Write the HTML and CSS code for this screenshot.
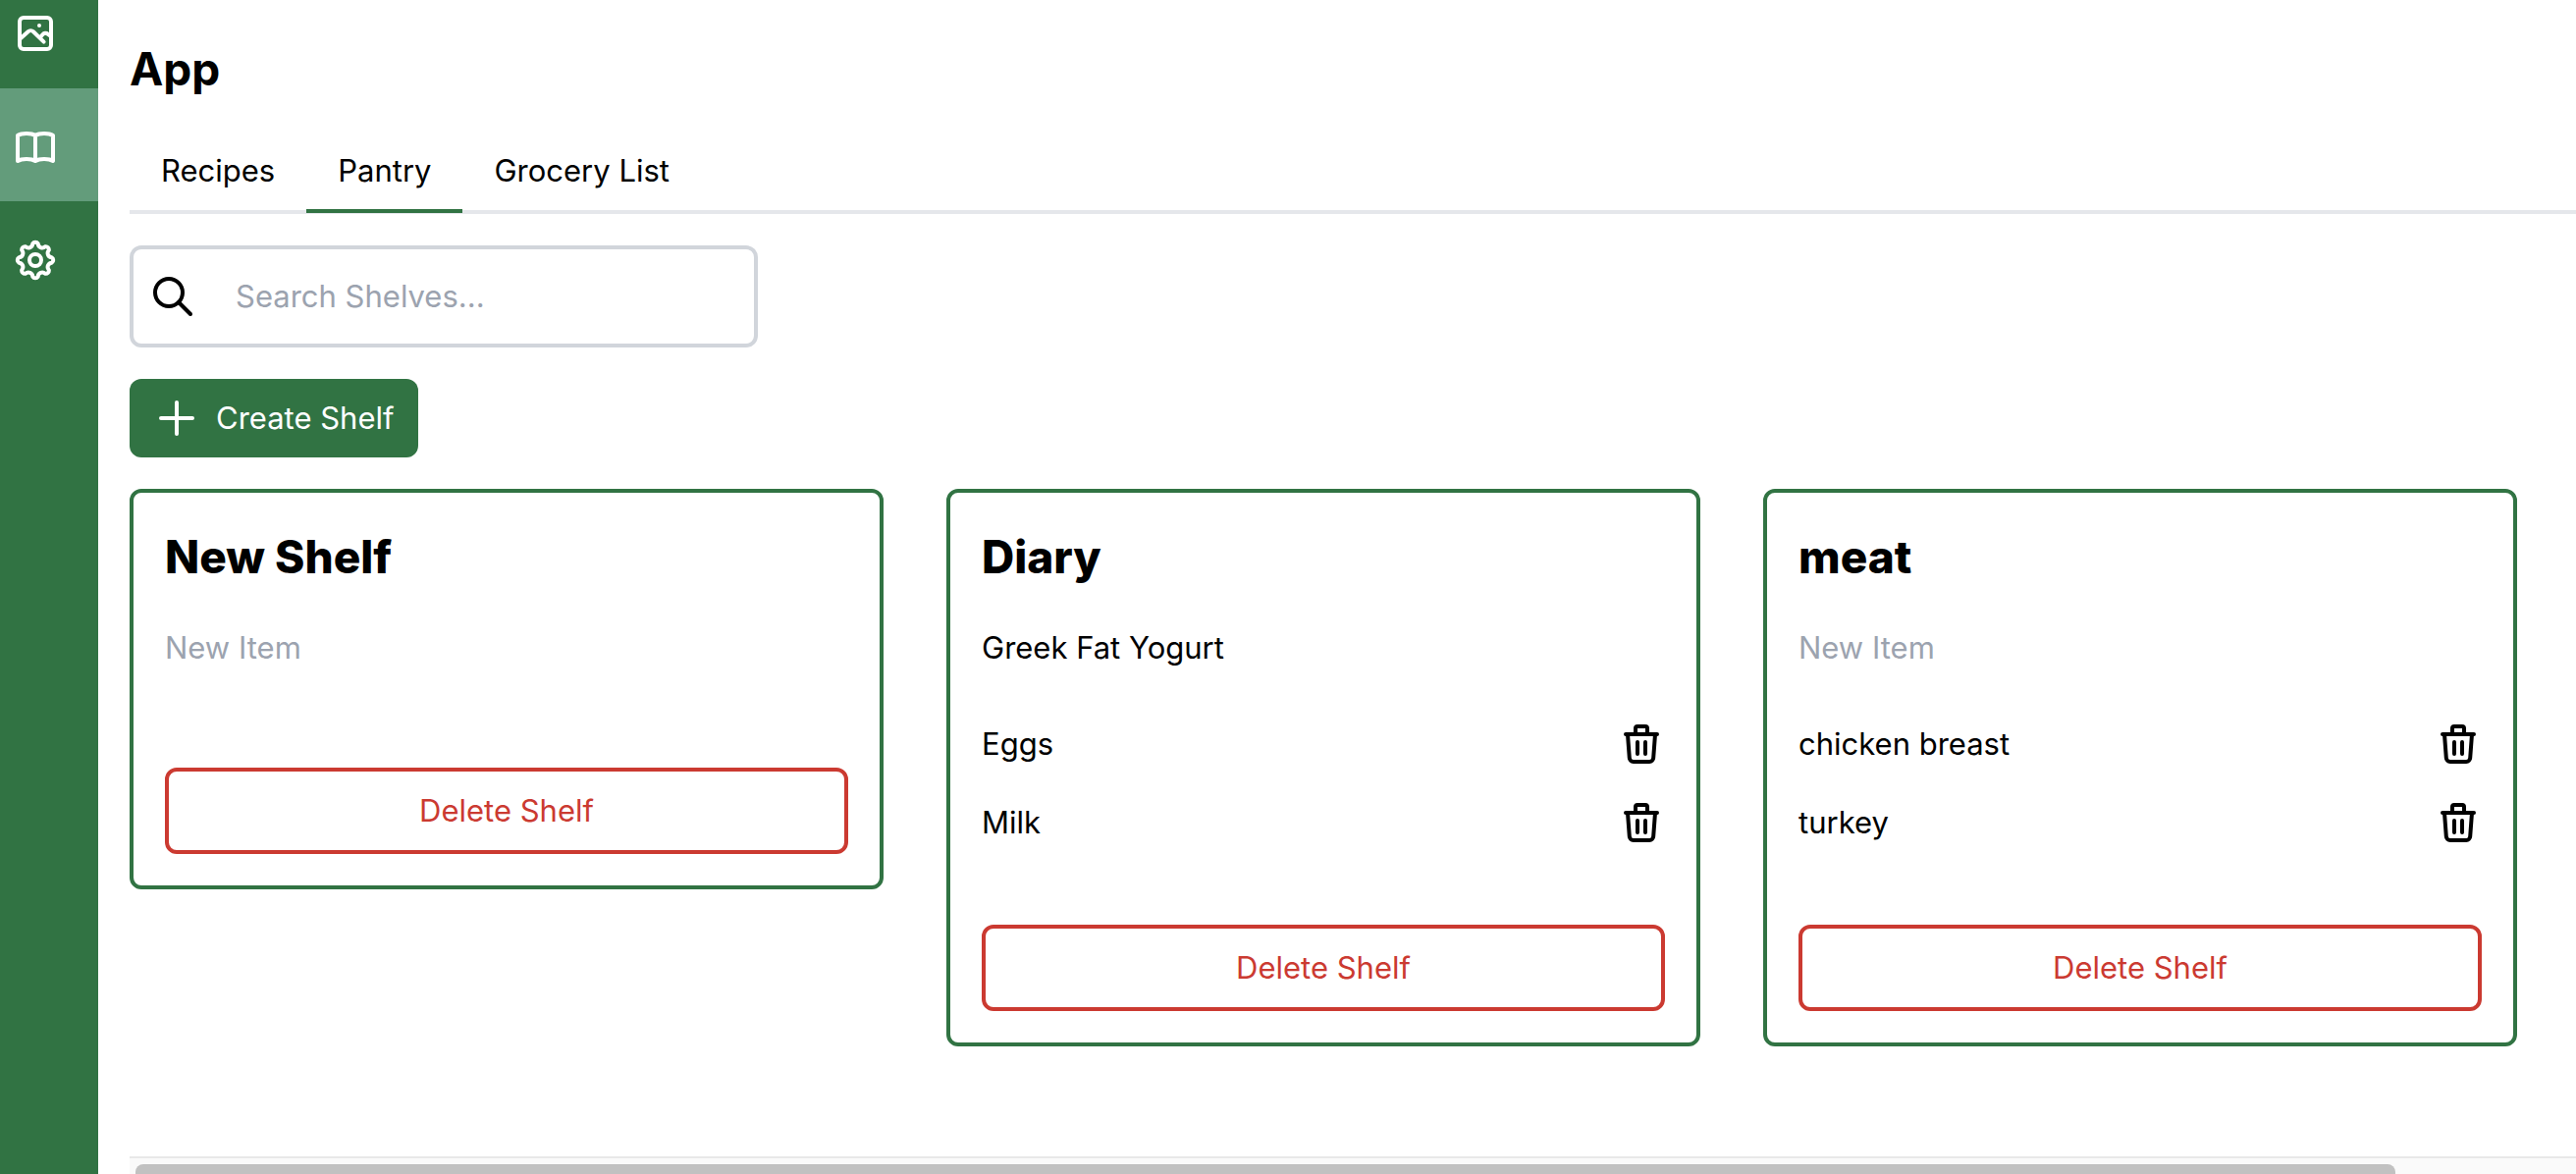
FILE: index.html
```html
<!DOCTYPE html>
<html lang="en">
<head>
<meta charset="utf-8">
<title>App</title>
<link rel="stylesheet" href="styles.css">
</head>
<body>
<svg class="sprite" aria-hidden="true">
  <symbol id="trash" viewBox="0 0 24 24">
    <path d="M4 7h16M5 7l.9 12.1A2 2 0 0 0 7.900 21h8.200a2 2 0 0 0 2-1.900L19 7M9 7V4a1 1 0 0 1 1-1h4a1 1 0 0 1 1 1v3M10 11v6M14 11v6"/>
  </symbol>
</svg>
<nav class="sidebar" aria-label="Main">
  <a class="side-link side-link-first" href="#gallery" aria-label="Gallery">
    <svg class="icon" viewBox="0 0 24 24"><rect x="4" y="4" width="16" height="16" rx="2"/><path d="M4 15l4.300-3.900a2 2 0 0 1 2.700 0L16.300 16.300M14.500 14l1.300-1.500a1.800 1.800 0 0 1 2.500-.2L20 13.500"/><circle class="dot" cx="14" cy="8" r="1"/></svg>
  </a>
  <a class="side-link side-link-active" href="#app" aria-label="App">
    <svg class="icon" viewBox="0 0 24 24"><path d="M12 6s-1.500-1-4.500-1S3 6 3 6v13s1.500-1 4.500-1 4.500 1 4.500 1 1.500-1 4.500-1 4.500 1 4.500 1V6s-1.500-1-4.500-1S12 6 12 6zM12 6v13"/></svg>
  </a>
  <a class="side-link" href="#settings" aria-label="Settings">
    <svg class="icon" viewBox="0 0 24 24"><path d="M10.670 3.600A1.600 1.600 0 0 1 13.330 3.600A2.200 2.200 0 0 0 17 5.120A1.600 1.600 0 0 1 18.880 7A2.200 2.200 0 0 0 20.400 10.670A1.600 1.600 0 0 1 20.400 13.330A2.200 2.200 0 0 0 18.880 17A1.600 1.600 0 0 1 17 18.880A2.200 2.200 0 0 0 13.330 20.400A1.600 1.600 0 0 1 10.670 20.400A2.200 2.200 0 0 0 7 18.880A1.600 1.600 0 0 1 5.120 17A2.200 2.200 0 0 0 3.600 13.330A1.600 1.600 0 0 1 3.600 10.670A2.200 2.200 0 0 0 5.120 7A1.600 1.600 0 0 1 7 5.120A2.200 2.200 0 0 0 10.670 3.600z"/><circle cx="12" cy="12" r="3"/></svg>
  </a>
</nav>
<main class="main">
  <h1 class="page-title">App</h1>
  <nav class="tabs" aria-label="Sections">
    <a class="tab" href="#recipes">Recipes</a>
    <a class="tab tab-active" href="#pantry" aria-current="page">Pantry</a>
    <a class="tab" href="#grocery">Grocery List</a>
  </nav>
  <label class="search">
    <svg class="icon" viewBox="0 0 24 24" aria-hidden="true"><circle cx="11" cy="10" r="7"/><path d="M16 15l6 6"/></svg>
    <input class="search-input" type="search" placeholder="Search Shelves..." aria-label="Search shelves">
  </label>
  <button class="create" type="button">
    <svg class="icon" viewBox="0 0 24 24" aria-hidden="true"><path d="M12 4v16M4 12h16"/></svg>
    Create Shelf
  </button>
  <section class="shelves">
    <article class="shelf">
      <h2 class="shelf-title">New Shelf</h2>
      <input class="new-item" type="text" placeholder="New Item" aria-label="New item">
      <ul class="items"></ul>
      <button class="delete" type="button">Delete Shelf</button>
    </article>
    <article class="shelf">
      <h2 class="shelf-title">Diary</h2>
      <input class="new-item" type="text" placeholder="New Item" aria-label="New item" value="Greek Fat Yogurt">
      <ul class="items">
        <li class="item">Eggs<button class="remove" type="button" aria-label="Remove Eggs"><svg class="icon"><use href="#trash"/></svg></button></li>
        <li class="item">Milk<button class="remove" type="button" aria-label="Remove Milk"><svg class="icon"><use href="#trash"/></svg></button></li>
      </ul>
      <button class="delete" type="button">Delete Shelf</button>
    </article>
    <article class="shelf">
      <h2 class="shelf-title">meat</h2>
      <input class="new-item" type="text" placeholder="New Item" aria-label="New item">
      <ul class="items">
        <li class="item">chicken breast<button class="remove" type="button" aria-label="Remove chicken breast"><svg class="icon"><use href="#trash"/></svg></button></li>
        <li class="item">turkey<button class="remove" type="button" aria-label="Remove turkey"><svg class="icon"><use href="#trash"/></svg></button></li>
      </ul>
      <button class="delete" type="button">Delete Shelf</button>
    </article>
  </section>
  <div class="scrollbar"><div class="scrollbar-thumb"></div></div>
</main>
</body>
</html>
```
FILE: styles.css
```css
* { box-sizing: border-box; }

body {
  display: flex;
  height: 100vh;
  margin: 0;
  overflow: hidden;
  background: #fff;
  color: #000;
  font: 31px/48px Inter, "Liberation Sans", sans-serif;
}

button, input { font: inherit; color: inherit; }
h1, h2, ul { margin: 0; padding: 0; }
ul { list-style: none; }

.sprite { display: none; }

.icon {
  display: block;
  flex: none;
  width: 48px;
  height: 48px;
  fill: none;
  stroke: currentColor;
  stroke-width: 2;
  stroke-linecap: round;
  stroke-linejoin: round;
}

.dot { fill: currentColor; stroke: none; }

.sidebar {
  flex: none;
  width: 100px;
  background: #317343;
  color: #fff;
}

.side-link {
  display: block;
  height: 115px;
  padding: 36px 12px 0;
  color: inherit;
}

.side-link-first { height: 90px; padding-top: 10px; }
.side-link-active { background: #639c7b; }

.main {
  display: flex;
  flex: 1;
  flex-direction: column;
  min-width: 0;
  padding-left: 32px;
}

.page-title {
  padding-top: 38px;
  font-size: 46px;
  font-weight: 700;
  line-height: 64px;
}

.tabs {
  display: flex;
  height: 116px;
  padding-top: 32px;
  border-bottom: 4px solid #e5e7eb;
}

.tab {
  height: 83px;
  padding: 16px 32px 0;
  border-bottom: 4px solid transparent;
  color: inherit;
  text-decoration: none;
}

.tab-active { border-bottom-color: #317343; }

.search {
  display: flex;
  align-items: center;
  width: 640px;
  height: 104px;
  margin-top: 32px;
  padding: 0 14px;
  border: 4px solid #d1d5db;
  border-radius: 12px;
}

.search-input {
  flex: 1;
  min-width: 0;
  margin-left: 42px;
  padding: 0;
  border: 0;
  background: none;
}

::placeholder { color: #9ca3af; opacity: 1; }

.create {
  display: flex;
  align-self: flex-start;
  align-items: center;
  gap: 16px;
  height: 80px;
  margin-top: 32px;
  padding: 0 24px;
  border: 0;
  border-radius: 12px;
  background: #317343;
  color: #fff;
}

.shelves {
  display: grid;
  grid-template-columns: repeat(3, 1fr);
  align-items: start;
  gap: 64px;
  margin-top: 32px;
  padding-right: 60px;
}

.shelf {
  padding: 32px;
  border: 4px solid #317343;
  border-radius: 12px;
}

.shelf-title {
  font-size: 46px;
  font-weight: 800;
  line-height: 66px;
}

.new-item {
  display: block;
  width: 100%;
  height: 118px;
  padding: 0;
  border: 0;
  background: none;
}

.item {
  display: flex;
  align-items: center;
  justify-content: space-between;
  height: 80px;
}

.remove { padding: 0; border: 0; background: none; }

.delete {
  width: 100%;
  height: 88px;
  margin-top: 64px;
  border: 4px solid #cb3a31;
  border-radius: 12px;
  background: none;
  color: #cb3a31;
}

.scrollbar {
  height: 18px;
  margin-top: auto;
  padding: 6px 184px 0 6px;
  border-top: 2px solid #e8e8e8;
  background: #fafafa;
}

.scrollbar-thumb {
  height: 10px;
  border-radius: 8px 8px 0 0;
  background: #c1c1c1;
}
```
